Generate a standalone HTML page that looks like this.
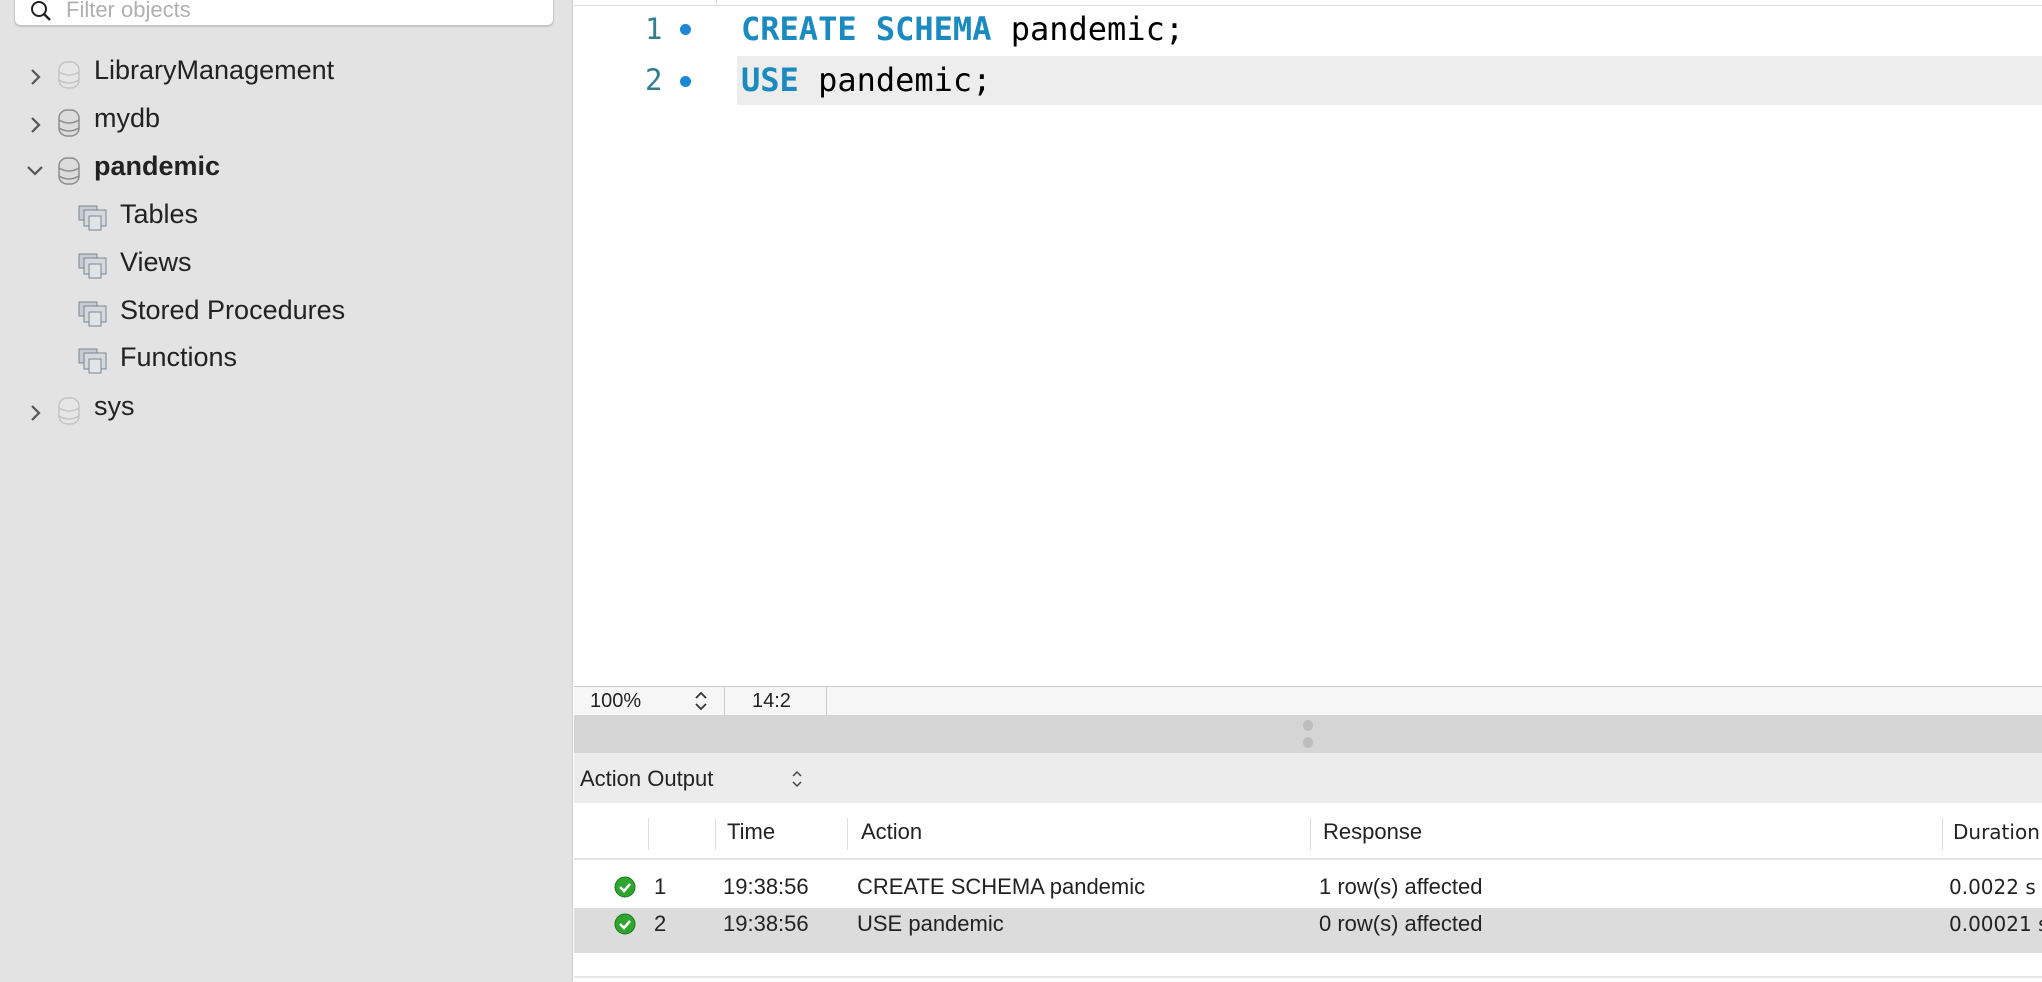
<!DOCTYPE html>
<html><head><style>
*{margin:0;padding:0;box-sizing:border-box}
body{width:2042px;height:982px;overflow:hidden;background:#fff;font-family:"Liberation Sans",sans-serif;position:relative}
.a{position:absolute;white-space:nowrap}
#side{left:0;top:0;width:573px;height:982px;background:#e3e3e3;border-right:1px solid #cfcfcf}
.search{left:14px;top:-14px;width:540px;height:40px;background:#fff;border:1px solid #c8c8c8;border-radius:7px;box-shadow:0 1px 1px rgba(0,0,0,.15)}
.tr{font-size:27px;color:#222;line-height:30px}
.code{font-family:"DejaVu Sans Mono","Liberation Mono",monospace;font-size:32px;line-height:40px}
.kw{color:#1a8bc0;font-weight:bold}
.ln{font-family:"DejaVu Sans Mono",monospace;font-size:29px;color:#2f7f8c}
.dot{width:11px;height:11px;border-radius:50%;background:#1b87d6}
.t{font-size:22px;color:#222;line-height:24px}
.sep{width:1px;background:#ddd}
</style></head><body>
<div id="side" class="a">
<div class="a search"><svg class="a" style="left:14px;top:12px" width="24" height="24" viewBox="0 0 24 24"><circle cx="10" cy="10" r="7" fill="none" stroke="#222" stroke-width="2"/><path d="M15 15l6 6" stroke="#222" stroke-width="2.4"/></svg><span class="a" style="left:51px;top:10px;font-size:22px;color:#b0b0b0">Filter objects</span></div>

<svg class="a" style="left:29px;top:67px" width="14" height="20"><path d="M3 3l7 7-7 7" fill="none" stroke="#555" stroke-width="2.2"/></svg>
<svg class="a" style="left:57px;top:60px" width="24" height="30"><g fill="#e6e6e6" stroke="#c4c4c4" stroke-width="1.5"><rect x="2" y="2" width="20" height="26" rx="8"/></g><path d="M2 12q10 6 20 0M2 20q10 6 20 0" stroke="#c4c4c4" fill="none" stroke-width="1.5"/></svg>
<span class="a tr" style="left:94px;top:55px">LibraryManagement</span>

<svg class="a" style="left:29px;top:115px" width="14" height="20"><path d="M3 3l7 7-7 7" fill="none" stroke="#555" stroke-width="2.2"/></svg>
<svg class="a" style="left:57px;top:108px" width="24" height="30"><g fill="#dcdcdc" stroke="#8c8c8c" stroke-width="1.5"><rect x="2" y="2" width="20" height="26" rx="8"/></g><path d="M2 12q10 6 20 0M2 20q10 6 20 0" stroke="#8c8c8c" fill="none" stroke-width="1.5"/></svg>
<span class="a tr" style="left:94px;top:103px">mydb</span>

<svg class="a" style="left:25px;top:164px" width="20" height="14"><path d="M3 3l7 7 7-7" fill="none" stroke="#555" stroke-width="2.2"/></svg>
<svg class="a" style="left:57px;top:156px" width="24" height="30"><g fill="#dcdcdc" stroke="#8c8c8c" stroke-width="1.5"><rect x="2" y="2" width="20" height="26" rx="8"/></g><path d="M2 12q10 6 20 0M2 20q10 6 20 0" stroke="#8c8c8c" fill="none" stroke-width="1.5"/></svg>
<span class="a tr" style="left:94px;top:151px;font-weight:bold">pandemic</span>

<svg class="a" style="left:78px;top:202px" width="30" height="32"><rect x="1" y="4" width="18" height="14" fill="#c8ccd2" stroke="#7d8590"/><rect x="6" y="8" width="22" height="16" fill="#d5d9de" stroke="#7d8590"/><rect x="11" y="14" width="12" height="14" fill="#e0e3e7" stroke="#7d8590"/></svg>
<span class="a tr" style="left:120px;top:199px">Tables</span>
<svg class="a" style="left:78px;top:250px" width="30" height="32"><rect x="1" y="4" width="18" height="14" fill="#c8ccd2" stroke="#7d8590"/><rect x="6" y="8" width="22" height="16" fill="#d5d9de" stroke="#7d8590"/><rect x="11" y="14" width="12" height="14" fill="#e0e3e7" stroke="#7d8590"/></svg>
<span class="a tr" style="left:120px;top:247px">Views</span>
<svg class="a" style="left:78px;top:298px" width="30" height="32"><rect x="1" y="4" width="18" height="14" fill="#c8ccd2" stroke="#7d8590"/><rect x="6" y="8" width="22" height="16" fill="#d5d9de" stroke="#7d8590"/><rect x="11" y="14" width="12" height="14" fill="#e0e3e7" stroke="#7d8590"/></svg>
<span class="a tr" style="left:120px;top:295px">Stored Procedures</span>
<svg class="a" style="left:78px;top:345px" width="30" height="32"><rect x="1" y="4" width="18" height="14" fill="#c8ccd2" stroke="#7d8590"/><rect x="6" y="8" width="22" height="16" fill="#d5d9de" stroke="#7d8590"/><rect x="11" y="14" width="12" height="14" fill="#e0e3e7" stroke="#7d8590"/></svg>
<span class="a tr" style="left:120px;top:342px">Functions</span>

<svg class="a" style="left:29px;top:403px" width="14" height="20"><path d="M3 3l7 7-7 7" fill="none" stroke="#555" stroke-width="2.2"/></svg>
<svg class="a" style="left:57px;top:396px" width="24" height="30"><g fill="#e6e6e6" stroke="#c4c4c4" stroke-width="1.5"><rect x="2" y="2" width="20" height="26" rx="8"/></g><path d="M2 12q10 6 20 0M2 20q10 6 20 0" stroke="#c4c4c4" fill="none" stroke-width="1.5"/></svg>
<span class="a tr" style="left:94px;top:391px">sys</span>
</div>

<!-- editor -->
<div class="a" style="left:574px;top:5px;width:1468px;height:1px;background:#ddd"></div>
<div class="a" style="left:716px;top:0;width:1px;height:5px;background:#ddd"></div>
<div class="a" style="left:737px;top:56px;width:1305px;height:49px;background:#ededed"></div>
<span class="a ln" style="left:645px;top:12px">1</span><div class="a dot" style="left:680px;top:24px"></div>
<span class="a ln" style="left:645px;top:63px">2</span><div class="a dot" style="left:680px;top:76px"></div>
<div class="a code" style="left:741px;top:9px"><span class="kw">CREATE SCHEMA</span> pandemic;</div>
<div class="a code" style="left:741px;top:60px"><span class="kw">USE</span> pandemic;</div>

<!-- status bar -->
<div class="a" style="left:574px;top:686px;width:1468px;height:29px;background:#f6f6f6;border-top:1px solid #ccc"></div>
<span class="a t" style="left:590px;top:689px;font-size:20px">100%</span>
<svg class="a" style="left:694px;top:690px" width="14" height="22"><path d="M2 8l5-5 5 5M2 14l5 5 5-5" fill="none" stroke="#333" stroke-width="1.8"/></svg>
<div class="a sep" style="left:724px;top:686px;height:29px;background:#ccc"></div>
<span class="a t" style="left:752px;top:689px;font-size:20px">14:2</span>
<div class="a sep" style="left:826px;top:686px;height:29px;background:#ccc"></div>

<div class="a" style="left:574px;top:715px;width:1468px;height:38px;background:#d5d5d5"></div>
<div class="a" style="left:1303px;top:720px;width:10px;height:11px;border-radius:50%;background:#bdbdbd"></div>
<div class="a" style="left:1303px;top:737px;width:10px;height:11px;border-radius:50%;background:#bdbdbd"></div>

<div class="a" style="left:574px;top:753px;width:1468px;height:50px;background:#ececec"></div>
<span class="a t" style="left:580px;top:767px">Action Output</span>
<svg class="a" style="left:791px;top:770px" width="12" height="18"><path d="M2 6l4-4 4 4M2 12l4 4 4-4" fill="none" stroke="#444" stroke-width="1.5"/></svg>

<div class="a" style="left:574px;top:858px;width:1468px;height:2px;background:#e4e4e4"></div>
<div class="a sep" style="left:648px;top:818px;height:32px"></div>
<div class="a sep" style="left:715px;top:818px;height:32px"></div>
<div class="a sep" style="left:847px;top:818px;height:32px"></div>
<div class="a sep" style="left:1310px;top:818px;height:32px"></div>
<div class="a sep" style="left:1942px;top:818px;height:32px"></div>
<span class="a t" style="left:727px;top:820px">Time</span>
<span class="a t" style="left:861px;top:820px">Action</span>
<span class="a t" style="left:1323px;top:820px">Response</span>
<span class="a t" style="left:1953px;top:820px;font-family:'DejaVu Sans',sans-serif;font-size:20px">Duration</span>

<div class="a" style="left:574px;top:908px;width:1468px;height:45px;background:#dcdcdc"></div>
<div class="a" style="left:574px;top:976px;width:1468px;height:2px;background:#e6e6e6"></div>

<svg class="a" style="left:614px;top:876px" width="22" height="22"><circle cx="11" cy="11" r="10" fill="#2ea52e" stroke="#1e7a1e"/><path d="M6 11l4 4 6-7" fill="none" stroke="#fff" stroke-width="2.5"/></svg>
<span class="a t" style="left:654px;top:875px">1</span>
<span class="a t" style="left:723px;top:875px">19:38:56</span>
<span class="a t" style="left:857px;top:875px">CREATE SCHEMA pandemic</span>
<span class="a t" style="left:1319px;top:875px">1 row(s) affected</span>
<span class="a t" style="left:1949px;top:875px;font-family:'DejaVu Sans',sans-serif;font-size:20px">0.0022 s</span>

<svg class="a" style="left:614px;top:913px" width="22" height="22"><circle cx="11" cy="11" r="10" fill="#2ea52e" stroke="#1e7a1e"/><path d="M6 11l4 4 6-7" fill="none" stroke="#fff" stroke-width="2.5"/></svg>
<span class="a t" style="left:654px;top:912px">2</span>
<span class="a t" style="left:723px;top:912px">19:38:56</span>
<span class="a t" style="left:857px;top:912px">USE pandemic</span>
<span class="a t" style="left:1319px;top:912px">0 row(s) affected</span>
<span class="a t" style="left:1949px;top:912px;font-family:'DejaVu Sans',sans-serif;font-size:20px">0.00021 s</span>
</body></html>
